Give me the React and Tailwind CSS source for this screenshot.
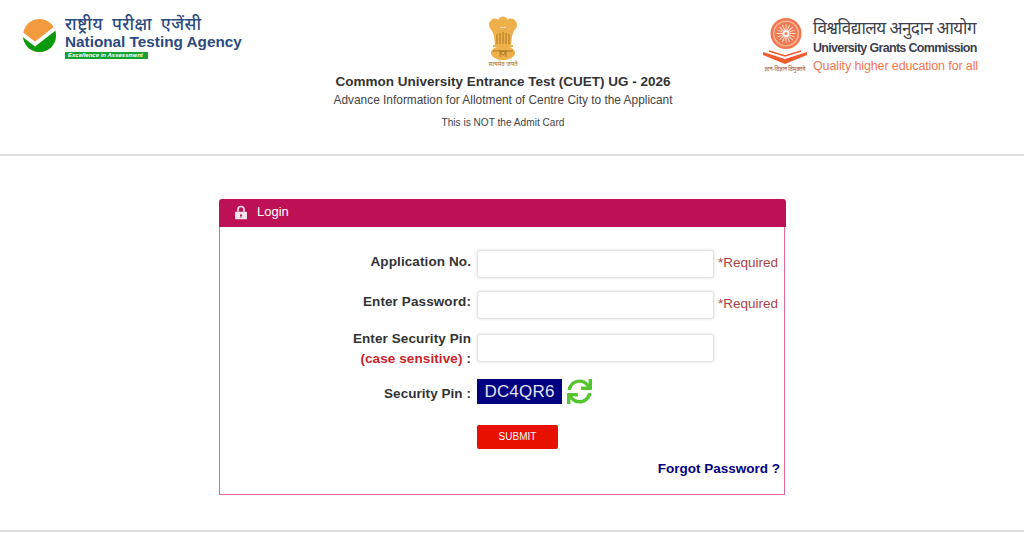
import React from "react";
import { FaSync } from "react-icons/fa";

const sans = { fontFamily: '"Liberation Sans", Arial, sans-serif' };

function NtaLogo() {
  return (
    <div className="flex items-start gap-[9px]">
      <svg width="33" height="33" viewBox="0 0 33 33" className="mt-[2px] shrink-0">
        <defs>
          <clipPath id="ntaCircle">
            <circle cx="16.5" cy="16.5" r="16.5" />
          </clipPath>
        </defs>
        <g clipPath="url(#ntaCircle)">
          <rect width="33" height="33" fill="#f39a3e" />
          <path d="M-1 16 L12 26 L34 9 L34 34 L-1 34Z" fill="#0a9a0e" />
          <path d="M-1 15 L12 25 L34 8" fill="none" stroke="#fff" strokeWidth="4" />
        </g>
      </svg>
      <div className="flex flex-col mt-[1px]">
        <div className="text-[17px] leading-[16px] font-medium text-[#2c4a7f] tracking-[0.5px] [word-spacing:4px] whitespace-nowrap font-['Noto_Sans_Devanagari','Noto_Sans',sans-serif]">राष्ट्रीय परीक्षा एजेंसी</div>
        <div className="text-[15.3px] leading-[15px] font-bold text-[#2c4a7f] whitespace-nowrap font-['Liberation_Sans',sans-serif]">National Testing Agency</div>
        <div className="mt-[3px] w-[83px] h-[7px] bg-[#18a030] text-white text-[6px] leading-[7px] italic font-bold pl-[3px] whitespace-nowrap font-['Liberation_Sans',sans-serif]">Excellence in Assessment</div>
      </div>
    </div>
  );
}

function Emblem() {
  return (
    <svg width="30" height="53" viewBox="0 0 30 53">
      <g fill="#eeb04a">
        <ellipse cx="15" cy="6" rx="5" ry="5.5" />
        <ellipse cx="7" cy="9" rx="6" ry="6.5" />
        <ellipse cx="23" cy="9" rx="6" ry="6.5" />
        <path d="M3 12 L27 12 L24 20 L23 29 L7 29 L6 20Z" />
        <rect x="5" y="29" width="20" height="2" />
        <ellipse cx="15" cy="37" rx="12" ry="7" />
      </g>
      <g stroke="#9a6a1c" strokeWidth="0.8" fill="none">
        <path d="M9 18V28M12 17V28M15 16V28M18 17V28M21 18V28" />
        <path d="M5 35H25M12 34V41M18 34V41" />
        <circle cx="15" cy="37" r="2" />
      </g>
      <text x="15" y="50" textAnchor="middle" fontSize="6" fill="#a5701f" fontFamily="Noto Sans Devanagari, Noto Sans, sans-serif">सत्यमेव जयते</text>
    </svg>
  );
}

function UgcLogo() {
  const spokes = Array.from({ length: 16 }, (_, i) => i * 22.5);
  return (
    <div className="flex items-start gap-[6px]">
      <svg width="44" height="58" viewBox="0 0 44 58" className="shrink-0">
        <circle cx="23" cy="17.5" r="15.5" fill="#f4764e" />
        <circle cx="23" cy="17.5" r="13" fill="#fbb89e" />
        <circle cx="23" cy="17.5" r="11.5" fill="#f4764e" />
        <g stroke="#fde0d2" strokeWidth="1">
          {spokes.map((a) => (
            <line key={a} x1="23" y1="8" x2="23" y2="14" transform={`rotate(${a} 23 17.5)`} />
          ))}
        </g>
        <circle cx="23" cy="17.5" r="3.5" fill="#fff" />
        <circle cx="23" cy="17.5" r="1.5" fill="#f4764e" />
        <path d="M0 36 L22 43 L44 36 L44 39 L22 48 L0 39Z" fill="#ee5c30" />
        <path d="M6 35 L22 40 L38 35" stroke="#ee5c30" strokeWidth="1.5" fill="none" />
        <text x="22" y="55" textAnchor="middle" fontSize="5.5" fill="#9a4a30" fontFamily="Noto Sans Devanagari, Noto Sans, sans-serif">ज्ञान-विज्ञान विमुक्तये</text>
      </svg>
      <div className="flex flex-col pt-[3px] w-[165px]">
        <div className="text-[17px] leading-[22px] text-[#3d3f4d] whitespace-nowrap tracking-[-0.55px] font-['Noto_Sans_Devanagari','Noto_Sans',sans-serif]">विश्वविद्यालय अनुदान आयोग</div>
        <div className="mt-[-1px] text-[12.5px] leading-[17px] font-bold text-[#3d3f4d] whitespace-nowrap tracking-[-0.68px] font-['Liberation_Sans',sans-serif]">University Grants Commission</div>
        <div className="mt-[2px] text-[12.5px] leading-[15px] text-[#f4764e] tracking-[-0.12px] whitespace-nowrap font-['Liberation_Sans',sans-serif]">Quality higher education for all</div>
      </div>
    </div>
  );
}

function Row({ label, required, className = "", labelClass = "" }) {
  return (
    <div className={`flex items-start ${className}`}>
      <div className={`w-[257px] pr-[6px] text-right text-[13.5px] leading-[20px] font-bold text-[#333] shrink-0 tracking-[0.1px] ${labelClass}`}>{label}</div>
      <input className="w-[237px] h-[28px] bg-white border border-[#e3e3e3] rounded-[3px] shadow-[0_0_3px_rgba(0,0,0,0.15)] shrink-0" />
      {required && <span className="ml-[4px] mt-[4px] text-[13.5px] leading-[18px] text-[#a94442]">*Required</span>}
    </div>
  );
}

export default function App() {
  return (
    <div style={sans} className="w-[1024px] h-[534px] bg-white overflow-hidden font-['Liberation_Sans',sans-serif]">
      <header className="relative h-[156px] border-b-2 border-[#dddddd] flex justify-between pl-[23px] pr-[46px]">
        <div className="pt-[17px]"><NtaLogo /></div>
        <div className="pt-[16px]"><UgcLogo /></div>
        <div className="absolute left-[303px] top-[16px] w-[400px] flex flex-col items-center text-center">
          <Emblem />
          <div className="mt-[4px] text-[13.5px] leading-[18px] font-bold text-[#333]">Common University Entrance Test (CUET) UG - 2026</div>
          <div className="text-[11.9px] leading-[18px] text-[#444]">Advance Information for Allotment of Centre City to the Applicant</div>
          <div className="mt-[7px] text-[10.15px] leading-[14px] text-[#444]">This is NOT the Admit Card</div>
        </div>
      </header>

      <main className="pt-[43px] pl-[219px]">
        <section className="w-[566px] h-[296px] flex flex-col">
          <div className="h-[28px] -mr-[1px] bg-[#be1155] rounded-t-[3px] flex items-center pl-[16px] gap-[10px] text-white text-[13px] shrink-0">
            <svg width="12" height="15" viewBox="0 0 14 16" className="-mt-[2px]">
              <path d="M3.5 7V4.5a3.5 3.5 0 0 1 7 0V7" fill="none" stroke="#f7e3ea" strokeWidth="2" />
              <path fillRule="evenodd" d="M1 7h12a1 1 0 0 1 1 1v7a1 1 0 0 1-1 1H1a1 1 0 0 1-1-1V8a1 1 0 0 1 1-1Zm6 3a1.3 1.3 0 0 0-.6 2.4V14h1.2v-1.6A1.3 1.3 0 0 0 7 10Z" fill="#f7e3ea" />
            </svg>
            <span className="-mt-[2px]">Login</span>
          </div>
          <div className="flex-1 border border-t-0 border-[#e06a9a] pt-[23px]">
            <Row label="Application No." required labelClass="mt-[2px]" />
            <Row label="Enter Password:" required className="mt-[13px]" labelClass="mt-[1px]" />
            <Row
              className="mt-[15px]"
              label={
                <div className="-mt-[5px]">
                  Enter Security Pin
                  <br />
                  <span className="text-[#c9242b]">(case sensitive)</span> :
                </div>
              }
            />
            <div className="flex items-center mt-[9px]">
              <div className="w-[257px] pt-[6px] pr-[6px] text-right text-[13.5px] font-bold text-[#333] tracking-[0.05px] shrink-0">Security Pin :</div>
              <div className="w-[85px] h-[25px] bg-[#000080] text-[#e4e4f4] text-[17px] leading-[25px] text-center tracking-[0.2px]">DC4QR6</div>
              <FaSync className="ml-[5px] text-[25px] text-[#55c52f]" />
            </div>
            <div className="mt-[21px] pl-[257px]">
              <button className="block w-[81px] h-[24px] bg-[#e81000] rounded-[2px] text-white text-[10px] leading-[24px]">SUBMIT</button>
            </div>
            <div className="mt-[11px] pr-[4px] text-right text-[13.5px] leading-[18px] font-bold text-[#000080]">Forgot Password ?</div>
          </div>
        </section>
      </main>

      <div className="mt-[35px] h-[2px] bg-[#dddddd]" />
    </div>
  );
}
